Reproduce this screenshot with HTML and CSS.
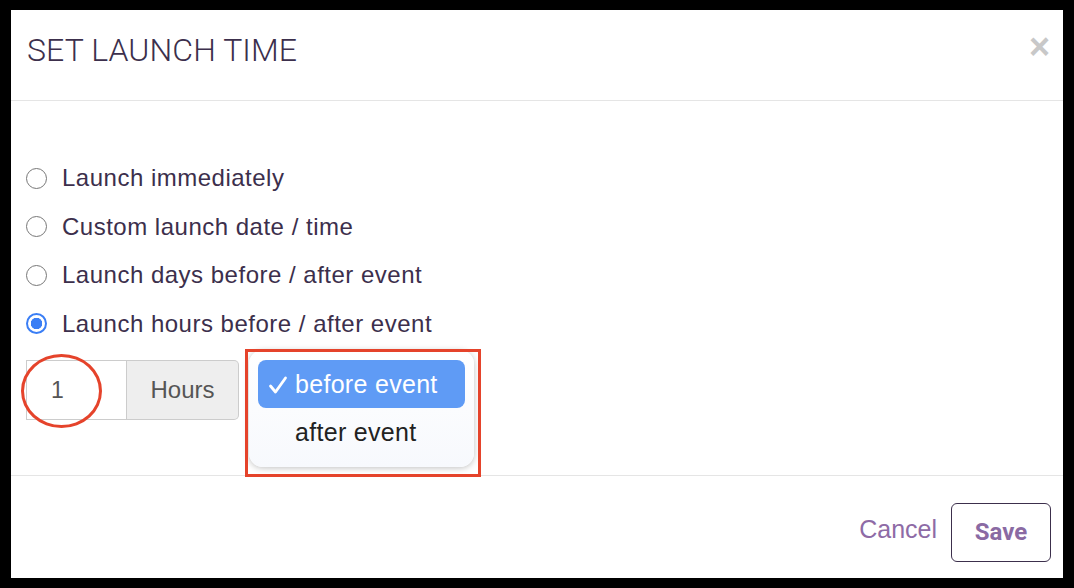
FILE: index.html
```html
<!DOCTYPE html>
<html lang="en">
<head>
    <meta charset="UTF-8">
    <meta name="viewport" content="width=device-width, initial-scale=1.0">
    <title>Set launch time</title>
    <link rel="stylesheet" href="styles.css">
</head>
<body>
    <div class="modal">
        <div class="modal__header">
            <h4 class="modal__title">SET LAUNCH TIME</h4>
            <span class="modal__close">&times;</span>
        </div>
        <div class="modal__body">
            <div class="radio"><span class="radio__dot"></span>Launch immediately</div>
            <div class="radio"><span class="radio__dot"></span>Custom launch date / time</div>
            <div class="radio"><span class="radio__dot"></span>Launch days before / after event</div>
            <div class="radio"><span class="radio__dot radio__dot--on"></span>Launch hours before / after event</div>
            <div class="offset">
                <div class="input-group">
                    <div class="input-group__field">1</div>
                    <div class="input-group__addon">Hours</div>
                    <span class="mark-circle"></span>
                </div>
                <div class="select">
                    <div class="menu">
                        <div class="menu__item menu__item--active">
                            <svg class="menu__check" width="20" height="20" viewBox="0 0 20 20"><path d="M2.5 11 L7.5 17 L17.5 3" fill="none" stroke="#fff" stroke-width="2.8" stroke-linecap="round" stroke-linejoin="round"/></svg>before event
                        </div>
                        <div class="menu__item">after event</div>
                    </div>
                    <span class="mark-box"></span>
                </div>
            </div>
        </div>
        <div class="modal__footer">
            <a class="btn-link">Cancel</a>
            <button class="btn">Save</button>
        </div>
    </div>
</body>
</html>
```
FILE: styles.css
```css
html, body {
    margin: 0;
    background: #000;
}
body {
    padding: 10px 11px;
}
.modal {
    display: flex;
    flex-direction: column;
    height: 568px;
    background: #fff;
    font-family: "Liberation Sans", Arial, sans-serif;
    color: #3c2f4c;
}
.modal__header {
    display: flex;
    justify-content: space-between;
    align-items: flex-start;
    height: 90px;
    padding: 0 13px 0 16px;
    border-bottom: 1px solid #e5e5e5;
}
.modal__title {
    margin: 21px 0 0;
    font-family: Roboto, sans-serif;
    font-weight: 300;
    font-size: 32px;
    letter-spacing: 0.1px;
    color: #3c2f4c;
}
.modal__close {
    margin-top: 19px;
    font-family: "Liberation Sans", Arial, sans-serif;
    font-weight: 700;
    font-size: 36px;
    line-height: 1;
    color: #c8c8c8;
}
.modal__body {
    flex: 1;
    padding: 53px 15px 0;
}
.radio {
    display: flex;
    align-items: center;
    height: 48.5px;
    font-size: 24px;
    letter-spacing: 0.5px;
}
.radio__dot {
    box-sizing: border-box;
    width: 21px;
    height: 21px;
    margin-right: 15px;
    border: 1.5px solid #777;
    border-radius: 50%;
}
.radio__dot--on {
    border: 2px solid #3a7ef5;
    background: radial-gradient(circle, #3a7ef5 0 5.5px, #fff 6px);
}
.offset {
    display: flex;
    align-items: flex-start;
    margin-top: 12px;
}
.input-group {
    position: relative;
    display: flex;
    height: 60px;
}
.input-group__field {
    box-sizing: border-box;
    width: 101px;
    padding-left: 24px;
    border: 1px solid #ccc;
    line-height: 58px;
    font-size: 23px;
    color: #555;
}
.input-group__addon {
    box-sizing: border-box;
    width: 112px;
    border: 1px solid #ccc;
    border-left: 0;
    border-radius: 0 5px 5px 0;
    background: #eee;
    line-height: 58px;
    text-align: center;
    font-size: 24px;
    color: #555;
}
.mark-circle {
    position: absolute;
    left: -5px;
    top: -6px;
    width: 75px;
    height: 68px;
    border: 3px solid #e5432b;
    border-radius: 50%;
}
.select {
    position: relative;
    margin-left: 10px;
    width: 225px;
    height: 60px;
}
.menu {
    position: absolute;
    left: 0;
    top: -10px;
    width: 225px;
    height: 117px;
    box-sizing: border-box;
    padding: 10px 9px;
    border-radius: 14px;
    background: linear-gradient(#fff, #f7f9fd);
    box-shadow: 0 1px 6px rgba(0, 0, 0, 0.25);
}
.menu__item {
    height: 48px;
    padding-left: 37px;
    line-height: 48px;
    font-size: 25px;
    letter-spacing: 0.3px;
    color: #222;
}
.menu__item--active {
    position: relative;
    border-radius: 8px;
    background: #5f9bf5;
    color: #fff;
}
.menu__check {
    position: absolute;
    left: 10px;
    top: 15px;
}
.mark-box {
    position: absolute;
    left: -4px;
    top: -11px;
    width: 230px;
    height: 122px;
    border: 3px solid #e5432b;
}
.modal__footer {
    display: flex;
    justify-content: flex-end;
    align-items: center;
    height: 102px;
    padding: 0 12px 0 0;
    border-top: 1px solid #e5e5e5;
}
.btn-link {
    margin-right: 14px;
    margin-top: 4px;
    font-size: 25px;
    color: #8e6ba6;
}
.btn {
    width: 100px;
    height: 59px;
    margin-top: 10px;
    border: 1px solid #3c2f4c;
    border-radius: 6px;
    background: #fff;
    font-family: Roboto, sans-serif;
    font-weight: 700;
    font-size: 24px;
    color: #8a6aa3;
}
```
